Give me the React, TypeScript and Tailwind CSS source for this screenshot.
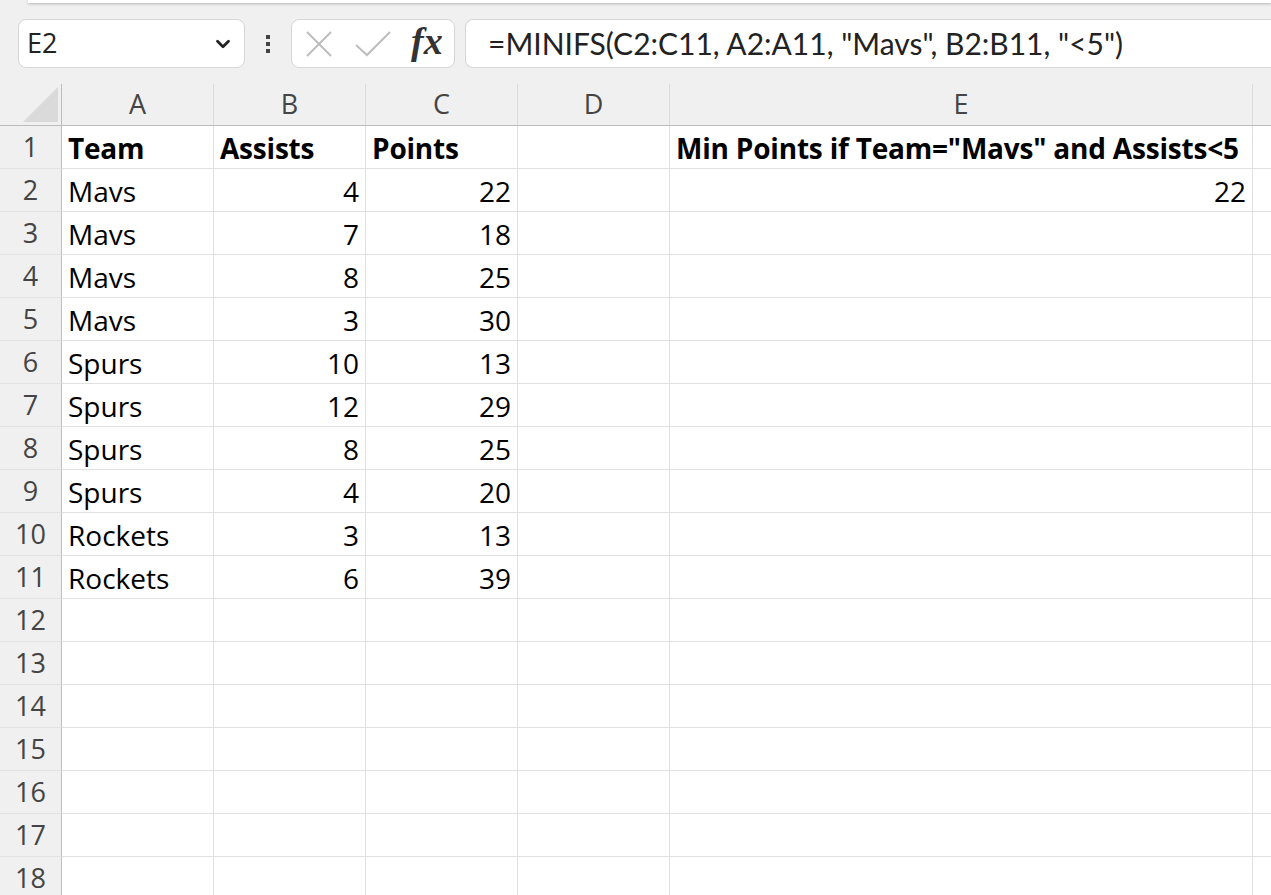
import { ChevronDown } from 'lucide-react';

const cols = [
  { key: 'A', width: 'w-[152px]' },
  { key: 'B', width: 'w-[152px]' },
  { key: 'C', width: 'w-[152px]' },
  { key: 'D', width: 'w-[152px]' },
  { key: 'E', width: 'w-[583px]' },
];

type Cell = { text: string; bold?: boolean; right?: boolean };

const data: Record<number, Cell[]> = {
  1: [
    { text: 'Team', bold: true },
    { text: 'Assists', bold: true },
    { text: 'Points', bold: true },
    { text: '' },
    { text: 'Min Points if Team="Mavs" and Assists<5', bold: true },
  ],
};

const rows: [string, string, string][] = [
  ['Mavs', '4', '22'],
  ['Mavs', '7', '18'],
  ['Mavs', '8', '25'],
  ['Mavs', '3', '30'],
  ['Spurs', '10', '13'],
  ['Spurs', '12', '29'],
  ['Spurs', '8', '25'],
  ['Spurs', '4', '20'],
  ['Rockets', '3', '13'],
  ['Rockets', '6', '39'],
];

rows.forEach((r, i) => {
  data[i + 2] = [
    { text: r[0] },
    { text: r[1], right: true },
    { text: r[2], right: true },
    { text: '' },
    { text: i === 0 ? '22' : '', right: true },
  ];
});

const cellFont = { fontFamily: '"Open Sans", "Noto Sans", sans-serif' };
const uiFont = { fontFamily: '"Open Sans", "Noto Sans", sans-serif' };
const barFont = { fontFamily: 'Lato, "Open Sans", sans-serif' };

function FormulaBar() {
  return (
    <div className="h-[84px] flex flex-col">
      <div className="h-[3px] ml-[28px] bg-white shadow-[0_1px_3px_rgba(0,0,0,0.25)]" />
      <div className="flex items-center mt-[16px] pl-[18px]">
        <div className="w-[227px] h-[49px] bg-white border border-[#d6d6d6] rounded-[8px] flex items-center justify-between pl-[8px] pr-[10px]">
          <span className="text-[27px] text-[#222]" style={uiFont}>E2</span>
          <ChevronDown className="w-[22px] h-[22px] text-[#222]" strokeWidth={3} />
        </div>
        <div className="w-[46px] flex flex-col items-center gap-[3px]">
          <span className="w-[4px] h-[4px] bg-[#444]" />
          <span className="w-[4px] h-[4px] bg-[#444]" />
          <span className="w-[4px] h-[4px] bg-[#444]" />
        </div>
        <div className="w-[164px] h-[49px] bg-white border border-[#d6d6d6] rounded-[8px] flex items-center pl-[13px]">
          <svg width="28" height="28" viewBox="0 0 28 28" className="text-[#bdbdbd]">
            <path d="M2 2 L26 26 M26 2 L2 26" stroke="currentColor" strokeWidth="2" fill="none" />
          </svg>
          <svg width="36" height="28" viewBox="0 0 36 28" className="ml-[22px] text-[#bdbdbd]">
            <path d="M1 15 L12 25 L35 2" stroke="currentColor" strokeWidth="2" fill="none" />
          </svg>
          <span
            className="ml-[20px] text-[38px] italic font-semibold text-[#333] leading-none -mt-[6px]"
            style={{ fontFamily: '"Liberation Serif", serif' }}
          >
            fx
          </span>
        </div>
        <div className="ml-[10px] flex-1 h-[49px] bg-white border border-[#d6d6d6] border-r-0 rounded-l-[8px] flex items-center pl-[22px]">
          <span className="text-[30px] text-[#222]" style={barFont}>
            =MINIFS(C2:C11, A2:A11, "Mavs", B2:B11, "&lt;5")
          </span>
        </div>
      </div>
    </div>
  );
}

function Sheet() {
  const rowNums = Array.from({ length: 18 }, (_, i) => i + 1);
  return (
    <div className="flex flex-col">
      <div className="flex h-[42px] border-b border-[#bdbdbd]">
        <div className="w-[62px] shrink-0 relative border-r border-[#bdbdbd]">
          <svg width="36" height="36" viewBox="0 0 36 36" className="absolute left-[23px] top-[3px]">
            <path d="M35 0 L35 35 L0 35 Z" fill="#dadada" />
          </svg>
        </div>
        {cols.map((c) => (
          <div
            key={c.key}
            className={`${c.width} shrink-0 border-r border-[#dcdcdc] flex items-center justify-center text-[27px] text-[#444]`}
            style={uiFont}
          >
            {c.key}
          </div>
        ))}
        <div className="flex-1" />
      </div>
      {rowNums.map((n) => (
        <div key={n} className="flex h-[43px]">
          <div
            className="w-[62px] shrink-0 border-r border-[#bdbdbd] border-b border-b-[#e2e2e2] flex items-center justify-center text-[27px] text-[#444]"
            style={uiFont}
          >
            {n}
          </div>
          {cols.map((c, ci) => {
            const cell = data[n]?.[ci];
            return (
              <div
                key={c.key}
                className={`${c.width} shrink-0 bg-white border-r border-b border-[#e1e1e1] flex items-center px-[6px] pt-[2px] text-[28px] text-black whitespace-nowrap overflow-visible ${
                  cell?.right ? 'justify-end' : 'justify-start'
                } ${cell?.bold ? 'font-bold tracking-[-0.2px]' : ''}`}
                style={cellFont}
              >
                {cell?.text}
              </div>
            );
          })}
          <div className="flex-1 bg-white border-b border-[#e1e1e1]" />
        </div>
      ))}
    </div>
  );
}

export default function App() {
  return (
    <div className="w-[1271px] h-[895px] overflow-hidden bg-[#f0f0f0]">
      <FormulaBar />
      <Sheet />
    </div>
  );
}
